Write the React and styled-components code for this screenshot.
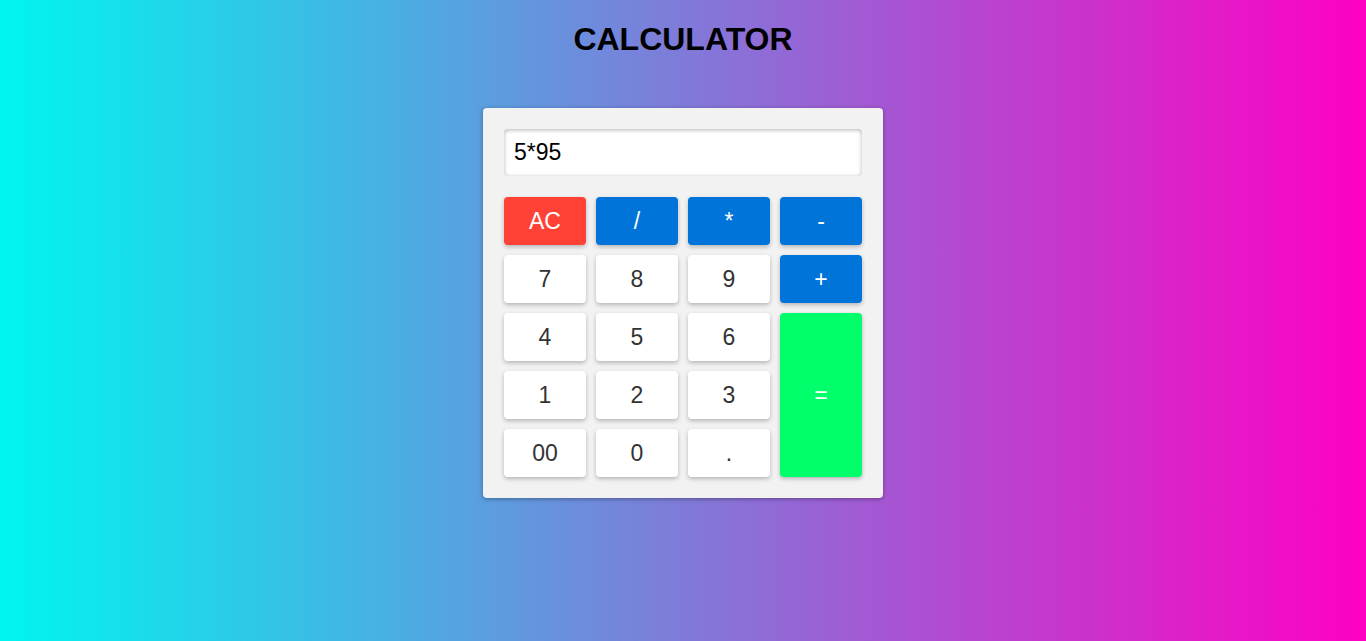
import React from 'react';
import styled, { createGlobalStyle } from 'styled-components';

const GlobalStyle = createGlobalStyle`
  html, body {
    margin: 0;
    padding: 0;
  }
  body {
    min-height: 641px;
    font-family: "Liberation Sans", Arial, sans-serif;
    background: linear-gradient(to right, #00f5ef, #ff00c3);
  }
`;

const Page = styled.div`
  display: flex;
  flex-direction: column;
  align-items: center;
  min-height: 641px;
`;

const Title = styled.h1`
  margin: 21px 0 0;
  font-size: 32px;
  line-height: 37px;
  font-weight: 700;
  color: #000;
`;

const Card = styled.div`
  margin-top: 50px;
  width: 358px;
  padding: 21px;
  background: #f2f2f2;
  border-radius: 4px;
  box-shadow: 0 1px 4px rgba(0, 0, 0, 0.35);
`;

const Display = styled.input`
  display: block;
  box-sizing: border-box;
  width: 358px;
  height: 47px;
  margin: 0 0 21px;
  padding: 0 10px;
  border: none;
  border-radius: 4px;
  background: #fff;
  box-shadow: inset 0 1px 4px rgba(0, 0, 0, 0.3);
  font-family: "Liberation Sans", Arial, sans-serif;
  font-size: 23px;
  color: #000;
  outline: none;
`;

const Keys = styled.div`
  display: grid;
  grid-template-columns: repeat(4, 82px);
  grid-auto-rows: 48px;
  gap: 10px;
`;

const tones = {
  digit: { bg: '#fff', fg: '#333' },
  op: { bg: '#0074d9', fg: '#fff' },
  clear: { bg: '#ff4136', fg: '#fff' },
  equal: { bg: '#00ff6a', fg: '#fff' },
};

const Key = styled.button`
  border: none;
  border-radius: 4px;
  background: ${(p) => tones[p.$tone].bg};
  color: ${(p) => tones[p.$tone].fg};
  box-shadow: 0 2px 4px rgba(0, 0, 0, 0.25);
  font-family: "Liberation Sans", Arial, sans-serif;
  font-size: 23px;
  cursor: pointer;
  grid-row: ${(p) => (p.$tall ? 'span 3' : 'auto')};
  padding: 0;
`;

const keys = [
  ['AC', 'clear'], ['/', 'op'], ['*', 'op'], ['-', 'op'],
  ['7', 'digit'], ['8', 'digit'], ['9', 'digit'], ['+', 'op'],
  ['4', 'digit'], ['5', 'digit'], ['6', 'digit'], ['=', 'equal', true],
  ['1', 'digit'], ['2', 'digit'], ['3', 'digit'],
  ['00', 'digit'], ['0', 'digit'], ['.', 'digit'],
];

export default function App() {
  return (
    <>
      <GlobalStyle />
      <Page>
        <Title>CALCULATOR</Title>
        <Card>
          <Display type="text" value="5*95" readOnly />
          <Keys>
            {keys.map(([label, tone, tall]) => (
              <Key key={label} $tone={tone} $tall={tall}>{label}</Key>
            ))}
          </Keys>
        </Card>
      </Page>
    </>
  );
}
